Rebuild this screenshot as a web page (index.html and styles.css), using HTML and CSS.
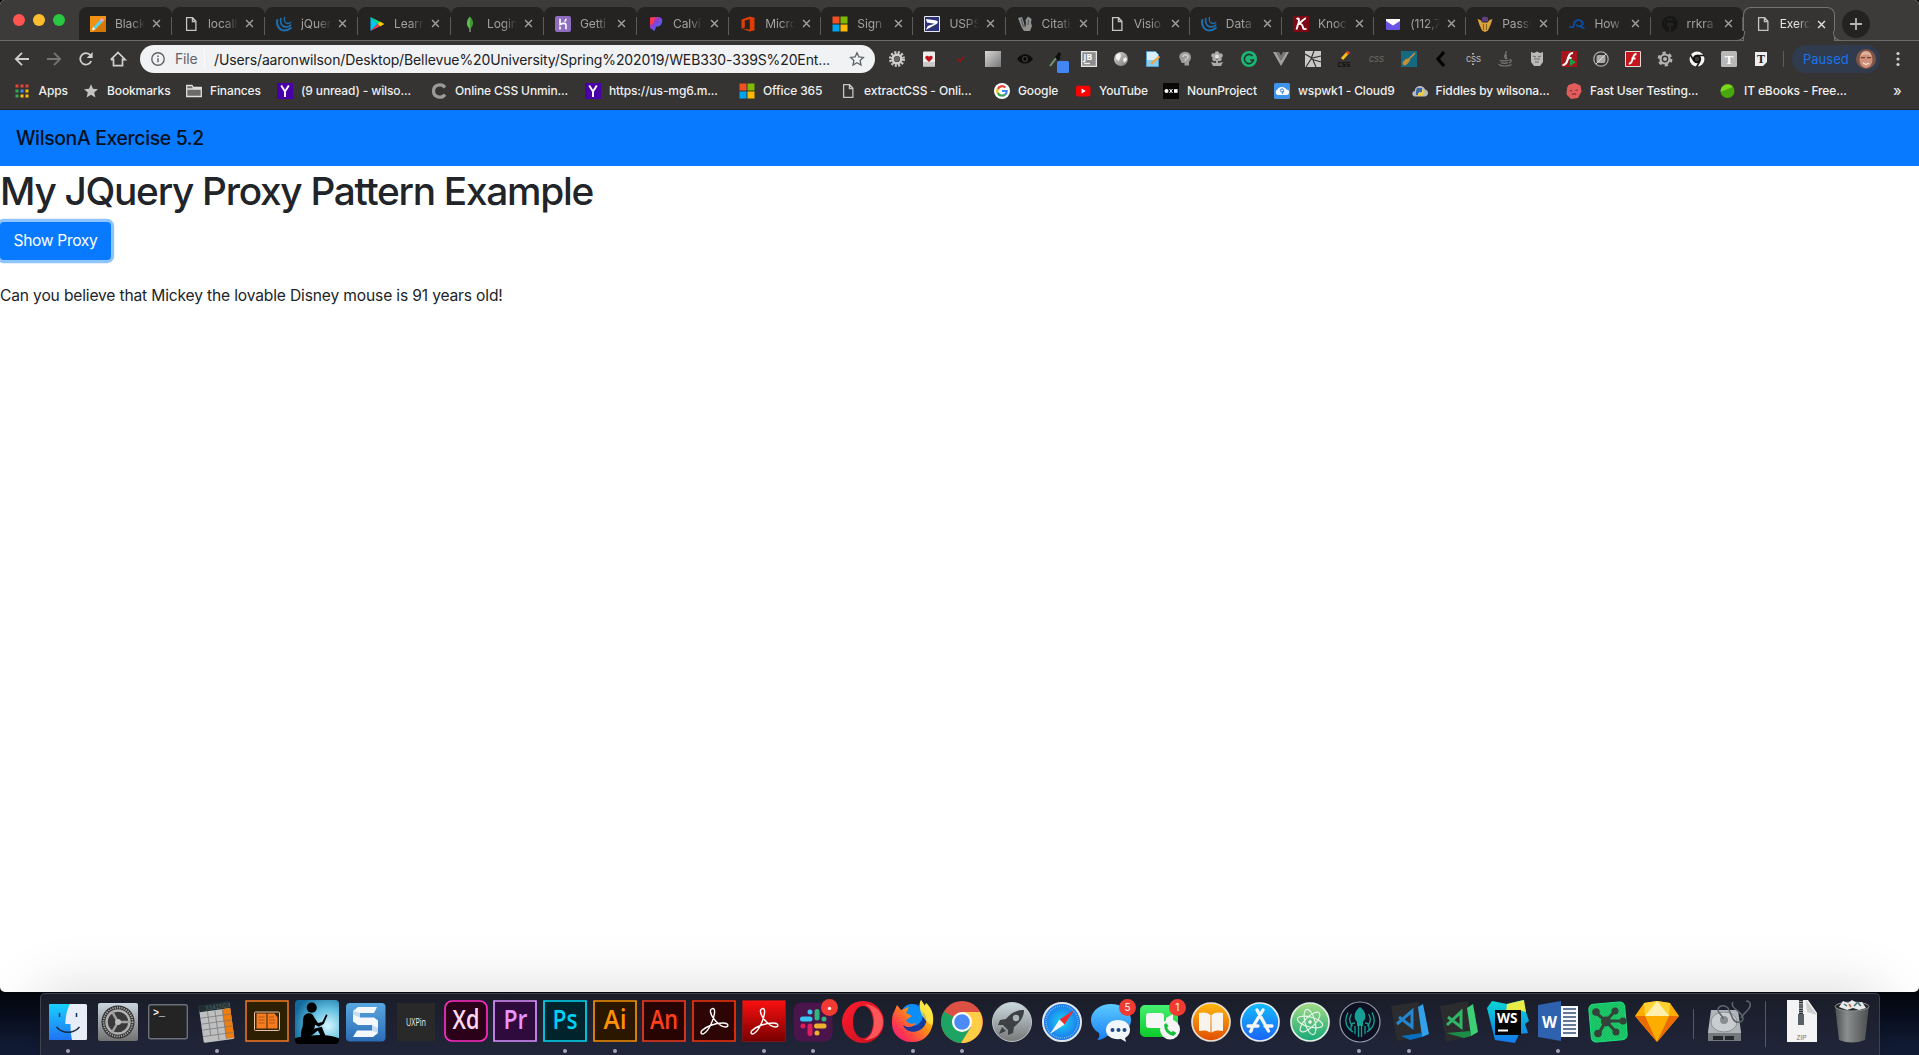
FILE: index.html
```html
<!DOCTYPE html>
<html lang="en">
<head>
<meta charset="utf-8">
<title>Exercise 5.2</title>
<link rel="stylesheet" href="styles.css">
</head>
<body>
<svg class="defs" width="0" height="0">
  <defs>
    <symbol id="doc" viewBox="0 0 16 16"><path d="M3.6 1.7h6l3.3 3.6v9H3.6zM9.4 1.9v3.6h3.4" fill="none" stroke="#c4c4c4" stroke-width="1.3"/></symbol>
    <symbol id="close" viewBox="0 0 10 10"><path d="M1.2 1.2l7.6 7.6M8.8 1.2L1.2 8.8" fill="none" stroke="currentColor" stroke-width="1.5"/></symbol>
    <symbol id="jquery" viewBox="0 0 16 16"><g fill="none" stroke="#1d70b0" stroke-linecap="round"><path d="M1.3 4C.2 9 3 14.300 8 14.500c3 0 5-1 6.800-2.600" stroke-width="2"/><path d="M4.800 2.500C3.800 6.500 5.500 10.300 9 10.900c2.500.3 4.300-.4 5.800-1.700" stroke-width="1.700"/><path d="M8.500 1.500C7.800 4 8.800 6.700 10.800 7.300c1.500.4 2.800.1 4-.8" stroke-width="1.400"/></g></symbol>
    <symbol id="ms" viewBox="0 0 16 16"><path fill="#f25022" d="M.5.5h7v7h-7z"/><path fill="#7fba00" d="M8.500.5h7v7h-7z"/><path fill="#00a4ef" d="M.5 8.500h7v7h-7z"/><path fill="#ffb900" d="M8.500 8.500h7v7h-7z"/></symbol>
    <symbol id="yahoo" viewBox="0 0 16 16"><path fill="#4a00a8" d="M0 0h16v16H0z"/><path d="M4.200 2.500L8 8.500l3.800-6M8 8.300V14" fill="none" stroke="#fff" stroke-width="1.900"/></symbol>
    <symbol id="acrobat" viewBox="0 0 44 44"><path d="M19.500 9c2-1.500 3.500 0 3 4-.8 7-6 18-10.500 20.500-2.500 1.400-4-.8-2-3 4-4 13-7.500 21-7.500 6 0 6 4 2.500 4-6 0-14-9.500-15-15-.3-1.500.2-2.500 1-3z" fill="none" stroke="#fff" stroke-width="1.400"/></symbol>
    <linearGradient id="gSteel" x2="0" y2="1"><stop stop-color="#c9d6dd"/><stop offset="1" stop-color="#717171"/></linearGradient>
    <linearGradient id="gFinder" x2="0" y2="1"><stop stop-color="#18d0ff"/><stop offset="1" stop-color="#2074f5"/></linearGradient>
    <radialGradient id="gKindle" cx=".75" cy=".6" r=".8"><stop stop-color="#d3f6ff"/><stop offset=".5" stop-color="#62bfe0"/><stop offset="1" stop-color="#126a9c"/></radialGradient>
    <linearGradient id="gSnag" x2="0" y2="1"><stop stop-color="#58a7e0"/><stop offset="1" stop-color="#2d6cb5"/></linearGradient>
    <linearGradient id="gRed" x2="0" y2="1"><stop stop-color="#fb1010"/><stop offset="1" stop-color="#780000"/></linearGradient>
    <linearGradient id="gOpera" x2="1" y2="1"><stop stop-color="#ff1b2d"/><stop offset="1" stop-color="#c3101f"/></linearGradient>
    <linearGradient id="gFox" x1="1" x2="0" y2="1"><stop stop-color="#fff44f"/><stop offset=".4" stop-color="#ff980e"/><stop offset=".75" stop-color="#ff3750"/><stop offset="1" stop-color="#e31587"/></linearGradient>
    <linearGradient id="gRocket" x2="0" y2="1"><stop stop-color="#cbdadf"/><stop offset="1" stop-color="#787878"/></linearGradient>
    <radialGradient id="gSafari"><stop stop-color="#1bd3f5"/><stop offset="1" stop-color="#1b70ea"/></radialGradient>
    <linearGradient id="gMsg" x2="0" y2="1"><stop stop-color="#5ccbff"/><stop offset="1" stop-color="#1a80f5"/></linearGradient>
    <linearGradient id="gFace" x2="0" y2="1"><stop stop-color="#45f070"/><stop offset="1" stop-color="#0ccb2a"/></linearGradient>
    <linearGradient id="gBooks" x2="0" y2="1"><stop stop-color="#ffb90f"/><stop offset="1" stop-color="#e04c00"/></linearGradient>
    <linearGradient id="gStore" x2="0" y2="1"><stop stop-color="#14bcfd"/><stop offset="1" stop-color="#1a62f5"/></linearGradient>
    <linearGradient id="gAtom" x2="0" y2="1"><stop stop-color="#a4dc86"/><stop offset="1" stop-color="#15a878"/></linearGradient>
    <linearGradient id="gTrash" x2="1"><stop stop-color="#4c4f50"/><stop offset=".35" stop-color="#8b8e8f"/><stop offset="1" stop-color="#4b4d4e"/></linearGradient>
    <linearGradient id="gWs" x2="0" y2="1"><stop stop-color="#08d8d2"/><stop offset="1" stop-color="#1478eb"/></linearGradient>
    <linearGradient id="gGrey" x2="1" y2="1"><stop stop-color="#d8d8d8"/><stop offset="1" stop-color="#777"/></linearGradient>
    <linearGradient id="gPandora" x2="1" y2="1"><stop stop-color="#ef2b71"/><stop offset=".5" stop-color="#7947df"/><stop offset="1" stop-color="#188cff"/></linearGradient>
    <pattern id="pGraffle" width="2" height="2" patternUnits="userSpaceOnUse" patternTransform="rotate(45)"><path fill="#20d070" d="M0 0h2v2H0z"/><path fill="#15b85c" d="M0 0h1v2H0z"/></pattern>
  </defs>
</svg>

<div class="window">
  <header class="tabstrip">
    <div class="lights"><i class="light red"></i><i class="light yellow"></i><i class="light green"></i></div>
    <nav class="tabs">
      <div class="tab"><svg class="fav" viewBox="0 0 16 16"><path fill="#f29111" d="M0 0h16v16H0z"/><path fill="#d57600" d="M16 3v13H3z"/><path d="M4 12.500L12.500 3.500" stroke="#5ad1e4" stroke-width="3.200"/><path d="M11 5l2-2.200" stroke="#f2a0b8" stroke-width="3.200"/><path fill="#fff" d="M2 14.500l1-3.500 2.400 2.200z"/></svg><span class="name">Black</span><svg class="x"><use href="#close"/></svg></div>
      <div class="tab"><svg class="fav"><use href="#doc"/></svg><span class="name">localh</span><svg class="x"><use href="#close"/></svg></div>
      <div class="tab"><svg class="fav"><use href="#jquery"/></svg><span class="name">jQuer</span><svg class="x"><use href="#close"/></svg></div>
      <div class="tab"><svg class="fav" viewBox="0 0 16 16"><path fill="#00c7f7" d="M1.500 1v14L8.500 8z"/><path fill="#00e676" d="M1.500 1l9.500 4.800L8.500 8z"/><path fill="#ffce00" d="M11 5.600L15.300 8 11 10.400 8.500 8z"/><path fill="#f23a50" d="M1.500 15L11 10.300 8.500 8z"/></svg><span class="name">Learn</span><svg class="x"><use href="#close"/></svg></div>
      <div class="tab"><svg class="fav" viewBox="0 0 16 16"><path fill="#3f9a36" d="M8 .5c3.500 4.200 4.600 8 0 12.700C3.500 9 4.500 4.500 8 .5z"/><path fill="#5fbb4e" d="M8 .5c-3.500 4-4.500 8.500 0 12.700z"/><path stroke="#b5c4a5" d="M8 12.500V16"/></svg><span class="name">Login</span><svg class="x"><use href="#close"/></svg></div>
      <div class="tab"><svg class="fav" viewBox="0 0 16 16"><rect width="16" height="16" rx="2" fill="#8e6cc0"/><path d="M5 2.800v5.700c2.800-1.500 6-1.600 6 .6v4.200M11 2.800c0 1.300-.4 2-1.400 3M5 10.500v3" fill="none" stroke="#fff" stroke-width="1.600"/></svg><span class="name">Getti</span><svg class="x"><use href="#close"/></svg></div>
      <div class="tab"><svg class="fav" viewBox="0 0 16 16"><path fill="url(#gPandora)" d="M2 1.500l7-.5c4.500 0 6 2 5 5.500-.8 3-3 4.200-6 4.200L6.500 15 2 12z"/><path fill="#ff3a4a" d="M2 2l5-1-1.500 6L2 9z"/></svg><span class="name">Calvi</span><svg class="x"><use href="#close"/></svg></div>
      <div class="tab"><svg class="fav" viewBox="0 0 16 16"><path fill="#dc3e06" fill-rule="evenodd" d="M1.500 3.500L9.800.5l4.700 1.300v12.400l-4.700 1.300-8.300-3 8.300 1V3.200L4.800 4.400v7l-3.300 1.400z"/></svg><span class="name">Micro</span><svg class="x"><use href="#close"/></svg></div>
      <div class="tab"><svg class="fav"><use href="#ms"/></svg><span class="name">Sign</span><svg class="x"><use href="#close"/></svg></div>
      <div class="tab"><svg class="fav" viewBox="0 0 16 16"><path fill="#2c3277" stroke="#e8e8ee" d="M.5.5h15v15H.5z"/><path fill="#fff" d="M2 3l9 1.300c3.500.6 3.500 2.400 1.500 3.700L1.800 14l2-4 6.700-2.200L3 6.500z"/></svg><span class="name">USPS</span><svg class="x"><use href="#close"/></svg></div>
      <div class="tab"><svg class="fav" viewBox="0 0 16 16"><path fill="#8f9293" d="M1 2l4-1 2 6 1 5 1-4-.5-4L11 .5l3.500 2.500L14 7l1 3-2 5H7L4.500 11z"/><path d="M4 3l2.500 8M11.500 4L11 9" stroke="#54575a" stroke-width="1.100"/><path d="M10 9l2 5" stroke="#b58a62"/></svg><span class="name">Citati</span><svg class="x"><use href="#close"/></svg></div>
      <div class="tab"><svg class="fav"><use href="#doc"/></svg><span class="name">Visio</span><svg class="x"><use href="#close"/></svg></div>
      <div class="tab"><svg class="fav"><use href="#jquery"/></svg><span class="name">Data</span><svg class="x"><use href="#close"/></svg></div>
      <div class="tab"><svg class="fav" viewBox="0 0 16 16"><path fill="#7e0714" d="M0 0h16v16H0z"/><path d="M3.500 3C6 1.500 6.500 3 5.500 7l-2 6.500M13 2.500C11.500 2 8.500 5.500 6 8c3-.5 3.500 1 4 3.500.3 2 2 2 3.500 1" fill="none" stroke="#fff" stroke-width="1.900"/></svg><span class="name">Knoc</span><svg class="x"><use href="#close"/></svg></div>
      <div class="tab"><svg class="fav" viewBox="0 0 16 16"><rect x="1" y="3" width="14" height="11" rx="1" fill="#6a54e8"/><path fill="#fff" d="M1 3h14v2L8 9.500 1 5z"/></svg><span class="name">(112,7</span><svg class="x"><use href="#close"/></svg></div>
      <div class="tab"><svg class="fav" viewBox="0 0 16 16"><path fill="#5c4180" d="M5 1.500L8 .5l3 1v4H5z"/><path fill="#d9a23b" d="M.5 3l3 1 2 2.500h5l2-2.500 3-1-2 6-2.500 5.500L8 16l-3-1.500L2.500 9z"/><path d="M6.500 8v6M9.500 8v6" stroke="#745014" stroke-width=".8"/></svg><span class="name">Passw</span><svg class="x"><use href="#close"/></svg></div>
      <div class="tab"><svg class="fav" viewBox="0 0 16 16"><path d="M.5 11c5 .8 4-1 4.500-3.500C6 3.500 12 3 13.500 6.500c.8 2-.8 4-3.500 3.800-1.500 0-2.500-.8-2.300-1.800M11 10.500l4.500 2" fill="none" stroke="#0b4fa5" stroke-width="1.800"/></svg><span class="name">How</span><svg class="x"><use href="#close"/></svg></div>
      <div class="tab"><svg class="fav" viewBox="0 0 16 16"><path fill="none" stroke="#151515" stroke-width="2" d="M6 14.500C-1 12-.5 2 7 1.200c9-.6 10 10.300 3 13.300v-3c3.500-.8 3-4 1.800-5l-.2-1.800-2 .7H6.500l-2-.7-.3 2c-1.500 2-.8 4.300 1.800 4.800z"/></svg><span class="name">rrkra</span><svg class="x"><use href="#close"/></svg></div>
      <div class="tab active"><svg class="fav"><use href="#doc"/></svg><span class="name">Exerc</span><svg class="x"><use href="#close"/></svg></div>
    </nav>
    <div class="newtab"><svg viewBox="0 0 12 12"><path d="M6 0v12M0 6h12" stroke="#b5b5b5" stroke-width="1.800"/></svg></div>
  </header>

  <div class="toolbar">
    <div class="navbtns">
      <svg viewBox="0 0 16 16"><path d="M15 8H2M8 1.800L1.800 8 8 14.200" fill="none" stroke="#cfcfcf" stroke-width="1.800"/></svg>
      <svg viewBox="0 0 16 16"><path d="M1 8h13M8 1.800L14.200 8 8 14.200" fill="none" stroke="#767574" stroke-width="1.800"/></svg>
      <svg viewBox="0 0 16 16"><path d="M13.200 10A5.700 5.700 0 1 1 12.400 4.300" fill="none" stroke="#cfcfcf" stroke-width="1.800"/><path fill="#cfcfcf" d="M14.600 1v6h-6z"/></svg>
      <svg viewBox="0 0 16 16"><path d="M3.500 7.500v7.200h9V7.500M.8 8.700L8 1.500l7.200 7.200h-2.700M.8 8.700h2.700" fill="none" stroke="#cfcfcf" stroke-width="1.700"/></svg>
    </div>
    <div class="omnibox">
      <svg class="info" viewBox="0 0 14 14"><circle cx="7" cy="7" r="6.200" fill="none" stroke="#5f6368" stroke-width="1.400"/><path d="M7 6.200v4M7 3.500V5" stroke="#5f6368" stroke-width="1.500"/></svg>
      <span class="scheme">File</span>
      <span class="url">/Users/aaronwilson/Desktop/Bellevue%20University/Spring%202019/WEB330-339S%20Ent...</span>
      <svg class="star" viewBox="0 0 16 16"><path d="M8 1.800l1.900 4.100 4.500.5-3.300 3.100.9 4.500L8 11.800 4 14l.9-4.500L1.600 6.400l4.500-.5z" fill="none" stroke="#5f6368" stroke-width="1.300"/></svg>
    </div>
    <div class="extensions">
      <svg viewBox="0 0 16 16"><circle cx="8" cy="8" r="6.500" fill="none" stroke="#c9c9c9" stroke-width="3" stroke-dasharray="2 1.400"/><circle cx="8" cy="8" r="4.300" fill="none" stroke="#d0d0d0" stroke-width="2.400"/><circle cx="8" cy="8" r="2.800" fill="#666"/></svg>
      <svg viewBox="0 0 16 16"><rect x="2" y=".5" width="12" height="15" rx="1" fill="#eee"/><path d="M2 11h12v4.500H2z" fill="#c9c9c9"/><path fill="#c1121b" d="M8 11L4.500 7.500C3.500 5 6.500 3.500 8 5.800 9.500 3.500 12.500 5 11.500 7.500z"/></svg>
      <svg viewBox="0 0 16 16"><path d="M5 8.500l1.800 2 4-5" fill="none" stroke="#9d1010" stroke-width="1.500"/></svg>
      <svg viewBox="0 0 16 16"><path fill="url(#gGrey)" d="M0 0h16v16H0z"/></svg>
      <svg viewBox="0 0 16 16"><path fill="#0b0b0b" d="M0 8c4-6.500 12-6.500 16 0-4 6-12 6-16 0z"/><circle cx="8" cy="8" r="3" fill="#3c3b3a"/><circle cx="8" cy="8" r="1.700" fill="#000"/></svg>
      <svg class="picker" viewBox="0 0 20 22"><path d="M1 15l7-9" stroke="#6e9b70" stroke-width="2"/><path d="M7 5l3.500 3.500M8 7l3-5" stroke="#0d0d0d" stroke-width="3.200"/><rect x="8" y="10" width="12" height="12" rx="1.500" fill="#4285f4"/></svg>
      <svg viewBox="0 0 16 16"><path fill="#8d8d8d" stroke="#e5e5e5" stroke-width="1.300" d="M.6.6h14.800v14.800H.6z"/><text x="2.600" y="9" class="ico-bold" font-size="8.500" fill="#fff">JB</text><path d="M3 12.500h6" stroke="#eee" stroke-width="1.300"/></svg>
      <svg viewBox="0 0 16 16"><circle cx="8" cy="8" r="7" fill="url(#gGrey)"/><path fill="#f3f3f3" d="M3 4l4-2 1 3-2 5-3-2zM10 8l3-2 1 3-3 3z"/></svg>
      <svg viewBox="0 0 16 16"><path fill="#d9effa" stroke="#52a0cf" d="M1.500.5h9l3 3v12h-12z"/><path fill="#8ecbea" d="M2 9h11v6H2z"/><path d="M6 13l8.500-7.500" stroke="#f0a33a" stroke-width="2.200"/></svg>
      <svg viewBox="0 0 16 16"><path fill="#9c9c9c" d="M8 .8c5 0 7 4 5.500 8L12 11v3.500H7.500V12H4.700L3 8C1 5 3.500.8 8 .8z"/><path d="M6 6c0-3 5-3 5 0 0 2-3 2-3 4" stroke="#d0d0d0" fill="none" stroke-width="1.400"/></svg>
      <svg viewBox="0 0 16 16"><g fill="#aaa"><circle cx="8" cy="2.500" r="2.300"/><circle cx="4.500" cy="4.500" r="2.300"/><circle cx="11.500" cy="4.500" r="2.300"/><circle cx="5.500" cy="8" r="2.300"/><circle cx="10.500" cy="8" r="2.300"/><path d="M7 9h2v3l5-1-2 4H4l-2-4 5 1z"/></g><circle cx="8" cy="5.500" r="2" fill="#e5e5e5"/></svg>
      <svg viewBox="0 0 16 16"><circle cx="8" cy="8" r="8" fill="#1fb574"/><path d="M11.500 5a4.600 4.600 0 1 0 1 4H9" fill="none" stroke="#1b3b30" stroke-width="1.600"/></svg>
      <svg viewBox="0 0 16 16"><path fill="#a0a0a0" d="M0 1h3.200L8 9.500 12.800 1H16L8 15z"/><path fill="#777" d="M3.200 1H6l2 3.500L10 1h2.800L8 9.500z"/></svg>
      <svg viewBox="0 0 16 16"><path fill="#c9c9c9" d="M0 0h16v16H0z"/><path d="M0 3l7 4 9-2M9 0L6 8l-5 8M6 8l10 3M8 9l3 7" stroke="#353433" stroke-width="1.200" fill="none"/></svg>
      <svg viewBox="0 0 16 16"><path d="M5 8l6-6.500" stroke="#f5c21b" stroke-width="3"/><path d="M10 2.800L12 .8" stroke="#e8432c" stroke-width="3"/><text x=".5" y="15.500" class="ico" font-size="8.500" fill="#050505">css</text></svg>
      <svg viewBox="0 0 16 16"><text x="0" y="11" class="ico-i" font-size="10" fill="#6b6a69">css</text></svg>
      <svg viewBox="0 0 16 16"><path fill="#136a82" d="M0 0h16v16H0z"/><path d="M7 9l7-7M5 10l4-1" stroke="#c78d35" stroke-width="1.700"/><ellipse cx="5" cy="11" rx="4" ry="2.300" transform="rotate(-45 5 11)" fill="#c78d35"/></svg>
      <svg viewBox="0 0 16 16"><path d="M11 1L5 8l6 7" fill="none" stroke="#000" stroke-width="3.200"/></svg>
      <svg viewBox="0 0 16 16"><text x="1" y="11" class="ico" font-size="10" fill="#bbb">css</text><path d="M8 2v1.500M8 12.500V14" stroke="#ddd" stroke-width="1.500"/></svg>
      <svg viewBox="0 0 16 16"><path d="M9 0c1.500 3-4 4 0 8M10 4c-2 1-1 2 0 4M3.500 9c-2 1 8 1.500 8 0M4 11.500c2 1 5 1 7 0M1.500 13.500c3 2 10 2 13 0M12 9c3-1 3 2 0 3" fill="none" stroke="#777" stroke-width="1.200"/></svg>
      <svg viewBox="0 0 16 16"><path fill="#b9b9b9" d="M2 1l3 1 3-1.500L11 2l3-1v10l-3 4H5l-3-4z"/><path d="M4 5l3 1M9 6l3-1M5 8h6M6 11h4" stroke="#6d6d6d" stroke-width="1.200"/></svg>
      <svg viewBox="0 0 16 16"><path fill="#a51519" d="M0 0h16v16H0z"/><path d="M12 2C8 2 8 5 6.500 9c-.8 3-2 5-5 5M6 7h4.500" fill="none" stroke="#fff" stroke-width="2.200"/><path fill="#14a04d" d="M9 7.500l6 3.700L9 15z"/></svg>
      <svg viewBox="0 0 16 16"><circle cx="8" cy="8" r="7.200" fill="none" stroke="#aaa" stroke-width="1.300"/><rect x="3.500" y="4" width="9" height="8" rx="2" fill="#aaa"/><path d="M3 13L13 3" stroke="#ddd"/></svg>
      <svg viewBox="0 0 16 16"><path fill="#c4161c" stroke="#e9d8d8" d="M.5.5h15v15H.5z"/><path d="M11.500 3C8 3 8.500 6 7.300 9c-.7 2.500-1.500 3.700-3.500 3.800M6.500 7.500h4" fill="none" stroke="#fff" stroke-width="1.800"/></svg>
      <svg viewBox="0 0 16 16"><circle cx="8" cy="8" r="4.500" fill="none" stroke="#b5b5b5" stroke-width="2.200"/><circle cx="8" cy="8" r="6.300" fill="none" stroke="#b5b5b5" stroke-width="2.200" stroke-dasharray="3.300 3.300"/><circle cx="8" cy="8" r="2" fill="#b5b5b5"/></svg>
      <svg viewBox="0 0 16 16"><circle cx="8" cy="8" r="7.500" fill="#f5f5f5"/><path d="M8 4.500h7M5 10L1.500 4M11 10l-3.500 6" stroke="#181818" stroke-width="1.500"/><circle cx="8" cy="8" r="4.200" fill="#111"/><circle cx="8" cy="8" r="2.300" fill="#383736"/></svg>
      <svg viewBox="0 0 16 16"><rect width="16" height="16" rx="1.500" fill="#b8b8b8"/><text x="3.700" y="12.500" class="ico-serif" font-size="13" fill="#fff">T</text></svg>
      <svg viewBox="0 0 16 16"><path fill="#eee" d="M2 1h12v10l-4 4H2z"/><text x="4" y="11.500" class="ico-serif" font-size="12" fill="#222">T</text></svg>
    </div>
    <div class="profile"><span>Paused</span><svg viewBox="0 0 20 20"><circle cx="10" cy="10" r="10" fill="#7d5547"/><ellipse cx="10" cy="10.500" rx="6.500" ry="8.500" fill="#cf9179"/><path d="M4.500 7.500C5 .5 15 .5 15.500 7.500 13 5 7 5 4.500 7.500z" fill="#e0b19a"/><path d="M5 8.700h4M11 8.700h4" stroke="#724334" stroke-width="1.200"/><path d="M7 14q3 2.500 6 0" stroke="#f0ddd5" fill="none" stroke-width="1.300"/></svg></div>
    <svg class="kebab" viewBox="0 0 4 16"><g fill="#d0d0d0"><circle cx="2" cy="2.500" r="1.600"/><circle cx="2" cy="8" r="1.600"/><circle cx="2" cy="13.500" r="1.600"/></g></svg>
  </div>

  <div class="bookmarks">
    <a><svg viewBox="1 0 16 16"><path fill="#ea4335" d="M1.500 1.500h3v3h-3zM6.500 1.500h3v3h-3zM11.500 1.500h3v3h-3z"/><path fill="#34a853" d="M1.500 6.500h3v3h-3zM1.500 11.500h3v3h-3z"/><path fill="#4285f4" d="M6.500 6.500h3v3h-3z"/><path fill="#fbbc05" d="M11.500 6.500h3v3h-3zM6.500 11.500h3v3h-3zM11.500 11.500h3v3h-3z"/></svg>Apps</a>
    <a><svg viewBox="0 0 16 16"><path d="M8 1.200l2 4.600 5 .4-3.800 3.300 1.200 4.900L8 11.800l-4.400 2.600 1.200-4.900L1 6.200l5-.4z" fill="#c4c4c4"/></svg>Bookmarks</a>
    <a><svg viewBox="0 0 16 16"><path d="M.7 13.500V2.500H6l1.300 2h8v9zM.7 6h14.600" fill="#6c6b6a" stroke="#dedede" stroke-width="1.300"/></svg>Finances</a>
    <a><svg><use href="#yahoo"/></svg>(9 unread) - wilso...</a>
    <a><svg viewBox="0 0 16 16"><path d="M14 4.500C11 0 2.500 1.500 2.500 8s8.500 8 11.500 3.500" fill="none" stroke="#999" stroke-width="3.200"/></svg>Online CSS Unmin...</a>
    <a><svg><use href="#yahoo"/></svg>https://us-mg6.m...</a>
    <a><svg><use href="#ms"/></svg>Office 365</a>
    <a><svg><use href="#doc"/></svg>extractCSS - Onli...</a>
    <a><svg viewBox="0 0 16 16"><circle cx="8" cy="8" r="8" fill="#fff"/><g fill="none" stroke-width="2.200"><path d="M11.300 4.500A4.700 4.700 0 0 0 3.800 6" stroke="#ea4335"/><path d="M3.800 5.800a4.700 4.700 0 0 0 0 4.400" stroke="#fbbc05"/><path d="M3.800 10A4.700 4.700 0 0 0 11 11.600" stroke="#34a853"/><path d="M8 8h4.700c0 1.700-.6 2.900-1.700 3.700" stroke="#4285f4"/></g></svg>Google</a>
    <a><svg viewBox="0 0 16 16"><rect x="1" y="2.800" width="14.500" height="10.600" rx="2" fill="#f00"/><path fill="#fff" d="M6.600 5.500v5L10.800 8z"/></svg>YouTube</a>
    <a><svg viewBox="0 0 16 16"><path fill="#080808" d="M0 0h16v16H0z"/><circle cx="3.500" cy="8" r="2" fill="#fff"/><path d="M6.500 6l3 4M9.500 6l-3 4" stroke="#fff"/><path fill="#fff" d="M11 6.200h3.600v3.600H11z"/></svg>NounProject</a>
    <a><svg viewBox="0 0 16 16"><rect width="16" height="16" rx="1.500" fill="#3f93e8"/><path fill="#fff" d="M3.500 12a3 3 0 0 1 0-5.500C4.500 3 11 3 12.500 6.500c3.500 0 3.500 5.500 0 5.500z"/><circle cx="8" cy="7.500" r="1.600" fill="none" stroke="#3281d8"/><path d="M9.600 8L8 11" stroke="#3281d8"/></svg>wspwk1 - Cloud9</a>
    <a><svg viewBox="0 0 16 16"><path fill="#b7bbc2" d="M3 13.500C-.5 13-.5 8.500 2.800 8 3 1.500 12 1.500 13 6.500c4 .5 4 6.500 0 7z"/><path fill="#3a68a8" d="M5 5h5v4H7v3H4V8z"/><path fill="#f0cc43" d="M10 7h2.500v3.500L10 13H6v-3h4z"/></svg>Fiddles by wilsona...</a>
    <a><svg viewBox="0 0 16 16"><path fill="#e25c5c" d="M2.500 2l6-2 6 2.500 1 6-3.500 6.500-7 1L.5 11.500 1 5z"/><path d="M4 7.500l2 .5M9.500 7.500l2-.5M6 11.500q2.500-1.500 4 0" stroke="#672c30" fill="none" stroke-width="1.200"/></svg>Fast User Testing...</a>
    <a><svg viewBox="0 0 16 16"><circle cx="7.500" cy="8" r="7" fill="#46a80c"/><path fill="#7ed51d" d="M.7 9A7 7 0 0 1 13 3.800z"/></svg>IT eBooks - Free...</a>
    <a class="more">»</a>
  </div>

  <main class="page">
    <nav class="navbar">WilsonA Exercise 5.2</nav>
    <h1>My JQuery Proxy Pattern Example</h1>
    <button class="btn">Show Proxy</button>
    <p>Can you believe that Mickey the lovable Disney mouse is 91 years old!</p>
  </main>
</div>

<footer class="dock">
  <div class="app on"><svg viewBox="0 0 44 44"><rect x="3" y="4" width="38" height="36" rx="1.500" fill="#e8eef7"/><path fill="url(#gFinder)" d="M4.500 4H24c-3 5.500-4.300 11-4.700 20h5.200c0 6 .5 11 1.500 16H3V5.500z"/><path d="M13.500 13v4M30.500 13v4" stroke="#1c3150" stroke-width="1.500"/><path d="M10.500 27c6 7 17 7 23 0" fill="none" stroke="#17273d" stroke-width="1.400"/></svg></div>
  <div class="app"><svg viewBox="0 0 44 44"><rect x="2" y="3" width="40" height="38" rx="2" fill="url(#gSteel)"/><circle cx="22" cy="22" r="16.500" fill="#2b2b2b"/><circle cx="22" cy="22" r="14.500" fill="none" stroke="#a7a7a7" stroke-width="2" stroke-dasharray="1.300 1"/><circle cx="22" cy="22" r="11.500" fill="#3a3a3a" stroke="#b0b0b0" stroke-width="2.500"/><path d="M22 22h12M22 22l-6-10.500M22 22l-6 10.500" stroke="#a0a0a0" stroke-width="2.500"/><circle cx="22" cy="22" r="3" fill="#bdbdbd"/></svg></div>
  <div class="app"><svg viewBox="0 0 44 44"><rect x="2.700" y="4.700" width="38.600" height="34" rx="2" fill="#242424" stroke="#6b717b" stroke-width="1.400"/><text x="7" y="16" class="ico-mono" font-size="10" fill="#eee">&gt;_</text></svg></div>
  <div class="app on"><svg viewBox="0 0 44 44"><g transform="rotate(-8 22 22)"><rect x="6" y="4" width="31" height="37" rx="1.500" fill="#bdbfc1"/><path fill="#202e30" d="M6 3h31v7H6z"/><path fill="#f07c0c" d="M29 10h8v30h-8z"/><path d="M6 16h31M6 22h31M6 28h31M6 34.500h31M14 10v24M21.500 10v30M29 10v30" stroke="#7a7570" stroke-width=".7"/><text x="12" y="9" class="ico" font-size="6.500" fill="#50686a">3341503</text></g></svg></div>
  <div class="app"><svg viewBox="0 0 44 44"><path fill="#2c1f02" stroke="#f47a20" stroke-width="1.500" d="M1 1h42v40H1z"/><rect x="9.500" y="12" width="25" height="18.500" rx="1" fill="#3a2508" stroke="#e6c5a7"/><path fill="#f57c20" d="M11.500 13.500h10v15h-10zM22.500 13.500h7l3 4v11h-10z"/><path d="M13.500 17h6M13.500 20h6M13.500 23h6M24 17h5M24 20h6M24 23h6" stroke="#a74b10" stroke-width=".8"/></svg></div>
  <div class="app"><svg viewBox="-1 -1 46 46"><rect x="-1" y="-1" width="46" height="45" rx="4" fill="url(#gKindle)"/><path d="M-1 39c6-2 12-3 16-2.500 10-1.500 20-1 30 2.500v3q-1 3-4 3H3q-4 0-4-4z"/><circle cx="16.500" cy="7" r="5.300"/><path d="M12 13c4-1 6 1 7 4l4 6 4.500-1 4-8 1.500 1-4 9-5 3-4-2-1 4 8-2 4 10h4v2h-8l-4-8-9 7-9 1c1-3-1-5 2-12 1-7-1-12 5-14z"/></svg></div>
  <div class="app"><svg viewBox="0 0 44 44"><rect x="2" y="3" width="39.500" height="38.500" rx="4" fill="url(#gSnag)"/><path fill="#f5f9fd" d="M14 7h19l-3 6H16v4.500h14l4 3V33l-5 4H9l4-6.500h15V25H14l-5-3.500V11z"/><path fill="#c5dbf0" d="M16 13v4.500l-7-3V11zM28 30.500V25l6 3v5z"/></svg></div>
  <div class="app"><svg viewBox="0 0 44 44"><path fill="#292929" d="M3 3h38v38H3z"/><text x="22" y="26" text-anchor="middle" class="ico-cond" font-size="11" textLength="20" lengthAdjust="spacingAndGlyphs" fill="#f0f0f0">UXPin</text></svg></div>
  <div class="app"><svg viewBox="0 0 44 44"><rect x="1" y="1" width="42" height="40" rx="7" fill="#2b0019" stroke="#ff2bc2" stroke-width="1.700"/><text x="22" y="29.300" text-anchor="middle" textLength="27" lengthAdjust="spacingAndGlyphs" class="adobe" fill="#ffd9f5">Xd</text></svg></div>
  <div class="app"><svg viewBox="0 0 44 44"><path fill="#2f0a3c" stroke="#d991ff" stroke-width="1.700" d="M1 1h42v40H1z"/><text x="22.500" y="29.300" text-anchor="middle" textLength="24" lengthAdjust="spacingAndGlyphs" class="adobe" fill="#e894ff">Pr</text></svg></div>
  <div class="app on"><svg viewBox="0 0 44 44"><path fill="#00232c" stroke="#00d9f5" stroke-width="1.700" d="M1 1h42v40H1z"/><text x="22" y="29.300" text-anchor="middle" textLength="25" lengthAdjust="spacingAndGlyphs" class="adobe" fill="#00d0f5">Ps</text></svg></div>
  <div class="app on"><svg viewBox="0 0 44 44"><path fill="#2b1600" stroke="#f59000" stroke-width="1.700" d="M1 1h42v40H1z"/><text x="22" y="29.300" text-anchor="middle" textLength="23" lengthAdjust="spacingAndGlyphs" class="adobe" fill="#ff9100">Ai</text></svg></div>
  <div class="app"><svg viewBox="0 0 44 44"><path fill="#270402" stroke="#ee3a1e" stroke-width="1.700" d="M1 1h42v40H1z"/><text x="22" y="29.300" text-anchor="middle" textLength="28" lengthAdjust="spacingAndGlyphs" class="adobe" fill="#ff3f1c">An</text></svg></div>
  <div class="app"><svg viewBox="0 0 44 44"><path fill="#2c0504" stroke="#f4330b" stroke-width="1.700" d="M1 1h42v40H1z"/><use href="#acrobat"/></svg></div>
  <div class="app on"><svg viewBox="0 0 44 44"><path fill="url(#gRed)" stroke="#a31a1a" stroke-width=".5" d="M.5.500h43v41H.5z"/><use href="#acrobat"/></svg></div>
  <div class="app on"><svg viewBox="0 0 44 44"><rect x="2.500" y="2.500" width="39" height="39" rx="8" fill="#4a154b"/><g stroke-width="5" stroke-linecap="round"><path d="M19 12v.1M11.500 19H19" stroke="#36c5f0"/><path d="M26 11.500V18M33 19v.1" stroke="#2eb67d"/><path d="M25.500 26H33M26 33v.1" stroke="#ecb22e"/><path d="M19 26v7.500M12 26v.1" stroke="#e01e5a"/></g></svg><b class="badge">•</b></div>
  <div class="app"><svg viewBox="0 0 44 44"><path fill="url(#gOpera)" fill-rule="evenodd" d="M22 1a21 21 0 1 0 0 42 21 21 0 1 0 0-42zm0 5c6 0 10 7 10 16s-4 16-10 16-10-7-10-16S16 6 22 6z"/><path fill="#fd565a" d="M23 4c12 1 19 8 19 18S35 40 23 40c6-2 10-9 10-18S29 6 23 4z"/></svg></div>
  <div class="app on"><svg viewBox="0 0 44 44"><circle cx="23" cy="20" r="16" fill="#143b9d"/><circle cx="21" cy="15" r="11" fill="#0b8ef5"/><path fill="url(#gFox)" d="M3 12l3-7 4 5 8-3-3 6 6 3-6 4c1 3 5 5 10 3-3 5-9 5-13 2 3 9 17 9 22 0 3-6 1-10-3-14-4-5-2-9-1-11l4 6 1-3c6 5 8 12 7 20-2 12-10 19-20 19C10 43 1 34 1 24c0-5 0-8 2-12z"/><path fill="#fff04c" d="M30 0l4 6 1-3c7 7 8 16 6 23-2-3-4-2-8-8-5-6-5-13-3-18z" opacity=".75"/></svg></div>
  <div class="app on"><svg viewBox="0 0 44 44"><circle cx="22" cy="22" r="21" fill="#dd5144"/><path fill="#1da462" d="M4 11.500A21 21 0 0 0 21 43l10-16-9-5z"/><path fill="#ffcd46" d="M21 43a21 21 0 0 0 19-31H22l9 15z"/><circle cx="22" cy="22" r="10" fill="#fff"/><circle cx="22" cy="22" r="7.800" fill="#4c8bf5"/></svg></div>
  <div class="app"><svg viewBox="0 0 44 44"><circle cx="22" cy="22" r="19.500" fill="url(#gRocket)" stroke="#bcc5c8"/><path fill="#3d4143" d="M34 10c-9 0-14 4-18 9l-6 1-2 5h5l5 5v5l5-2 1-6c5-4 10-9 10-17zM12 27l-3 7 7-3z"/><circle cx="26" cy="18" r="3.200" fill="#aab5b8"/></svg></div>
  <div class="app"><svg viewBox="0 0 44 44"><circle cx="22" cy="22" r="19" fill="url(#gSafari)" stroke="#dfe6ea" stroke-width="2"/><circle cx="22" cy="22" r="16" fill="none" stroke="#b5e7f7" stroke-width="1.500" stroke-dasharray=".5 1.500"/><path fill="#f12b2e" d="M34 10L19.500 19.500l5 5z"/><path fill="#f4f4f4" d="M10 34l9.500-14.500 5 5z"/></svg></div>
  <div class="app"><svg viewBox="0 0 44 44"><path fill="url(#gMsg)" d="M22 4c11 0 20 7 20 16S33 36 22 36h-4c-2 2-6 4-10 4 2-2 3-4 2-7-5-3-8-8-8-13C2 11 11 4 22 4z"/><path fill="#f2f7fb" d="M29 20c7 0 12 4 12 10 0 4-2 6-5 8l1 4-5-3c-9 1-15-3-15-9s5-10 12-10z"/><g fill="#1e4a85"><circle cx="23.500" cy="30" r="2"/><circle cx="29.500" cy="30" r="2"/><circle cx="35.500" cy="30" r="2"/></g></svg><b class="badge">5</b></div>
  <div class="app"><svg viewBox="0 0 44 44"><rect x="1" y="5" width="38" height="32" rx="5" fill="url(#gFace)"/><rect x="7" y="13" width="18" height="15" rx="3" fill="#f6f6f6"/><path fill="#f6f6f6" d="M27 18l7-4v14l-7-4z"/><circle cx="31" cy="29.500" r="10" fill="#f5f5f5"/><path d="M26.500 25c0 5 3 8.500 8.500 9.500M26 24l2.500 3M33 32l3.500 2" fill="none" stroke="#16c23d" stroke-width="2.800"/></svg><b class="badge">1</b></div>
  <div class="app"><svg viewBox="0 0 44 44"><circle cx="22" cy="22" r="19" fill="url(#gBooks)" stroke="#e9e0d8" stroke-width="1.700"/><path fill="#f7f3ee" d="M21.500 15c-3-3-8-3-11.500-2v18c4-1 8-1 11.500 1.500zM22.500 15c3-3 8-3 11.500-2v18c-4-1-8-1-11.500 1.500z"/></svg></div>
  <div class="app"><svg viewBox="0 0 44 44"><circle cx="22" cy="22" r="19" fill="url(#gStore)" stroke="#e4ecf2" stroke-width="1.700"/><path d="M19 10l11.500 21M25 10L14 28M10 26h10M27 26h7M12.500 31.500l1-1.500" stroke="#f5f5f5" stroke-width="3.300" stroke-linecap="round"/></svg></div>
  <div class="app"><svg viewBox="0 0 44 44"><circle cx="22" cy="22" r="19" fill="url(#gAtom)" stroke="#dff0e4" stroke-width="1.700"/><g fill="none" stroke="#e9f8ee" stroke-width="1.100"><ellipse cx="22" cy="22" rx="13" ry="5" transform="rotate(15 22 22)"/><ellipse cx="22" cy="22" rx="13" ry="5" transform="rotate(75 22 22)"/><ellipse cx="22" cy="22" rx="13" ry="5" transform="rotate(-45 22 22)"/></g><circle cx="22" cy="22" r="1.700" fill="#fff"/></svg></div>
  <div class="app on"><svg viewBox="0 0 44 44"><circle cx="22" cy="22" r="20" fill="#0c1020" stroke="#949cab" stroke-width="1.200"/><path fill="#169f94" d="M22 7c5 3.500 6 8 5 12l-2 3v4h-6v-4l-2-3c-1-4 0-8.500 5-12z"/><path d="M17 23c-4.500 0-4 2-4 8M27 23c4.500 0 4 2 4 8M17 26v8M27 26v8M10 12.500c-4 8-2 15 5 19.500M34 12.500c4 8 2 15-5 19.500M13.500 14c-3 5-2 9 1 12M30.500 14c3 5 2 9-1 12M20.500 25v12M23.500 25v12" fill="none" stroke="#169f94" stroke-width="1.300"/></svg></div>
  <div class="app on"><svg viewBox="0 0 44 44"><path fill="#2c2c2e" d="M4 6l28-4 4 35-26 4z"/><path fill="#32a0ea" d="M31 7l5-3 6 30-7 3z"/><path fill="#0870bd" d="M14 36l21-3v4l-12 3z"/><path d="M12 17l13 10V11L10 24" fill="none" stroke="#2386ce" stroke-width="3"/></svg></div>
  <div class="app"><svg viewBox="0 0 44 44"><path fill="#2c2c2e" d="M3 6l28-5 5 35-27 6z"/><path fill="#3dce76" d="M30 8l6-4 5 28-7 4z"/><path fill="#1c8c49" d="M9 33l25-2v5l-7 2z"/><path d="M11 17l13 10V12L10 25" fill="none" stroke="#31b667" stroke-width="3"/></svg></div>
  <div class="app"><svg viewBox="0 0 44 44"><path fill="url(#gWs)" d="M1 8l5-7 15 3L37 0l2 9 4 12-4 3 3 9-9 1-4 9-20-3z"/><path fill="#e9ed48" d="M21 4l17-4 2 12-8-2-12 2z"/><path fill="#050505" d="M9 10h26v25H9z"/><text x="11" y="23" class="ico-bold" font-size="13.500" fill="#fff">WS</text><path d="M12 30.500h10" stroke="#fff" stroke-width="2"/></svg></div>
  <div class="app on"><svg viewBox="0 0 44 44"><path fill="#f7f9fc" d="M22 6h20v31H22z"/><path d="M27 9h13M27 13h13M27 17h13M27 21h13M27 25h13M27 29h13M27 33h13" stroke="#344e79" stroke-width="1.500"/><path fill="#2e62ae" d="M2 5l23-4v40L2 37z"/><text x="6" y="28" class="ico-bold" font-size="16" fill="#fff" textLength="15" lengthAdjust="spacingAndGlyphs">W</text></svg></div>
  <div class="app"><svg viewBox="0 0 44 44"><rect x="4" y="3" width="36" height="38" rx="5" transform="rotate(-5 22 22)" fill="url(#pGraffle)" stroke="#1de080"/><path d="M20 21L10 13M20 21l9-10M20 21h17M20 21l10 11M20 21L13 33" stroke="#34423a" stroke-width="3"/><g fill="#34423a"><circle cx="20" cy="21.500" r="5"/><circle cx="10" cy="12" r="3.800"/><circle cx="29" cy="11" r="3.500"/><circle cx="37" cy="21" r="3.500"/><circle cx="30" cy="32" r="3.500"/><circle cx="12" cy="33.500" r="3.800"/></g></svg></div>
  <div class="app"><svg viewBox="0 0 44 44"><path fill="#fdad00" d="M9 3l13-2 13 2 9 13-22 26L0 16z"/><path fill="#fdd231" d="M9 3l13-2 13 2-1 13H10z"/><path fill="#fff0b0" d="M22 1l12 15H10z"/><path fill="#ea6c00" d="M0 16h10l12 26zM44 16H34L22 42z"/></svg></div>
  <i class="sep short"></i>
  <div class="app disk"><svg viewBox="0 0 44 44"><path fill="#aeb4b8" d="M4 10h27l3 22v9H1v-9z"/><path fill="#74797d" d="M1 33h33v8H1z"/><path fill="#26292b" d="M6 36h10v4H6zM18 36h9v4h-9z"/><ellipse cx="17" cy="22" rx="13" ry="10" fill="#c9cdd0" stroke="#8c9195"/><circle cx="17" cy="20" r="4" fill="#878c90"/><path d="M16 19c0-4-6-6-5-10 2-5 9-4 11 1l4 9c3 5 10 4 10-1 0-6-14-10-10-16M34 18c3-6 11-9 9-15-1-2-3-2-4-2" fill="none" stroke="#5c646a" stroke-width="1.500"/></svg></div>
  <i class="sep"></i>
  <div class="app zip"><svg viewBox="0 0 44 44"><path fill="#f4f4f4" d="M7 0h21l9 13v29H7z"/><path fill="#cfcfcf" d="M26 0l11 15-10-3z"/><path d="M21 0v20" stroke="#2f3438" stroke-width="4" stroke-dasharray="1.500 .6"/><path fill="#596066" d="M18 14h6v11h-6z"/><text x="16.500" y="39.500" class="ico" font-size="6.500" fill="#777">ZIP</text></svg></div>
  <div class="app"><svg viewBox="0 0 44 44"><path fill="url(#gTrash)" d="M5 6h34l-4 34q-13 5-26 0z"/><ellipse cx="22" cy="6.500" rx="17" ry="4.500" fill="#25282a" stroke="#8d9092"/><path fill="#e9e9e9" d="M9 7l4-6 5 2 4-3 5 3 5-1 4 6-7 2-6-2-6 2z"/><path d="M14 4l3 2M28 3l3 3M24 6l3-3" stroke="#3c6b74" stroke-width="1.500"/><path d="M19 4l2 3" stroke="#bd6038" stroke-width="1.500"/></svg></div>
</footer>
</body>
</html>
```
FILE: styles.css
```css
* { box-sizing: border-box; }
body {
  margin: 0;
  width: 1919px;
  height: 1055px;
  overflow: hidden;
  background: linear-gradient(#03050a 990px, #070c19 1010px, #111b34 1045px);
  font-family: Inter, "Liberation Sans", sans-serif;
}
svg { display: block; flex: none; overflow: visible; }
.defs { position: absolute; }
.window { height: 992px; background: #fff; border-radius: 5px; overflow: hidden; }

/* Tab strip */
.tabstrip {
  display: flex;
  height: 41px;
  padding-top: 7px;
  background: linear-gradient(#6b6a69, #6b6a69) 0 100% / 100% 1px no-repeat, #3c3b3a;
}
.lights { display: flex; gap: 8px; width: 79px; padding: 7px 0 0 13px; }
.light { width: 12px; height: 12px; border-radius: 50%; }
.red { background: #ff5550; }
.yellow { background: #febc2e; }
.green { background: #28c940; }
.tabs { display: flex; }
.tab {
  position: relative;
  display: flex;
  flex: none;
  align-items: center;
  width: 92.150px;
  height: 33px;
  padding-left: 11px;
  border-radius: 8px 8px 0 0;
  background: linear-gradient(#5c5b5a, #5c5b5a) 100% 10px / 1px 18px no-repeat, #242322;
  color: #a3a2a1;
}
.tab:nth-child(-n+6) { width: 93px; }
.fav { width: 16px; height: 16px; }
.name {
  width: 30px;
  margin: 0 7px 0 9px;
  overflow: hidden;
  white-space: nowrap;
  font-size: 12px;
  line-height: 16px;
  letter-spacing: -.1px;
  -webkit-mask-image: linear-gradient(90deg, #000 55%, transparent);
  mask-image: linear-gradient(90deg, #000 55%, transparent);
}
.x { width: 9px; height: 9px; }
.active {
  z-index: 1;
  height: 34px;
  padding-bottom: 1px;
  background: #353433;
  border: solid #737271;
  border-width: 1px 1px 0;
  color: #e4e4e4;
}
.active::before, .active::after {
  content: "";
  position: absolute;
  bottom: 0;
  width: 8px;
  height: 9px;
  border-bottom: 1px solid #737271;
}
.active::before { left: -8px; border-right: 1px solid #737271; border-radius: 0 0 8px; background: #242322; }
.active::after { right: -8px; border-left: 1px solid #737271; border-radius: 0 0 0 8px; background: #3c3b3a; }
.newtab { display: grid; place-items: center; width: 28px; height: 28px; margin: 3px 0 0 7px; border-radius: 50%; background: #242322; }
.newtab svg { width: 12px; }

/* Toolbar */
.toolbar { display: flex; align-items: center; height: 36px; background: #353433; }
.navbtns { display: flex; gap: 16px; width: 140px; padding-left: 14px; }
.navbtns svg { width: 16px; height: 16px; }
.omnibox { display: flex; align-items: center; width: 735px; height: 28px; padding: 0 10px 0 11px; border-radius: 14px; background: #f1f2f4; font-size: 14px; color: #202124; }
.info { width: 14px; }
.scheme { width: 30px; height: 20px; margin-left: 10px; line-height: 20px; letter-spacing: -.2px; color: #5f6368; border-right: 1px solid #fafafa; }
.url { flex: 1; margin-left: 9px; white-space: nowrap; letter-spacing: -.12px; }
.star { width: 16px; }
.extensions { display: flex; align-items: center; gap: 16px; height: 16px; padding: 0 14px; }
.extensions svg { width: 16px; height: 16px; }
.extensions .picker { width: 20px; height: 22px; margin: 0 -4px -6px 0; }
.profile { display: flex; align-items: center; justify-content: space-between; width: 88px; height: 28px; margin-left: 9px; padding: 0 4px 0 11px; border-radius: 14px; background: #303b4d; font-size: 13px; color: #1a73e8; position: relative; }
.profile::before { content: ""; position: absolute; left: -9px; top: 6px; width: 1px; height: 16px; background: #5c5b5a; }
.profile svg { width: 20px; }
.kebab { width: 4px; height: 16px; margin-left: 16px; }

/* Bookmarks bar */
.bookmarks {
  display: grid;
  grid-template-columns: 68.500px 103px 91px 154px 154px 154px 101px 154px 81px 88px 111px 137.500px 154.500px 154px 173px 30px;
  align-items: center;
  height: 33px;
  padding: 0 0 5px 14.500px;
  border-bottom: 1px solid #272625;
  background: #353433;
  font-size: 12px;
  font-weight: 500;
  color: #efefef;
}
.bookmarks a { display: flex; align-items: center; gap: 8px; white-space: nowrap; letter-spacing: -.12px; }
.bookmarks svg { width: 16px; height: 16px; }
.bookmarks .more { font-size: 15px; font-weight: 400; }

/* Page */
.page { color: #212529; }
.navbar { height: 56px; padding: 13px 16px; background: #087aff; color: #04101d; font-size: 19.400px; font-weight: 500; line-height: 30px; letter-spacing: -.35px; }
h1 { margin: 0 0 6px; font-size: 38.800px; font-weight: 500; line-height: 50px; letter-spacing: -1.280px; }
.btn { display: block; width: 111px; height: 38px; padding: 0; border: 0; border-radius: 4px; box-shadow: 0 0 0 3.200px #8ec5ff; background: #087aff; color: #fff; font: 15.600px/24px Inter, "Liberation Sans", sans-serif; letter-spacing: -.35px; }
p { margin: 24px 0 0; font-size: 15.600px; line-height: 24px; letter-spacing: -.16px; }

/* Dock */
.dock {
  position: relative;
  display: flex;
  width: 1840px;
  height: 62px;
  margin: 1px 0 0 40px;
  padding-left: 2.600px;
  border: solid #3f424c;
  border-width: 1px 1px 0;
  border-radius: 5px 5px 0 0;
  background: linear-gradient(#1a1d28, #20253a);
  box-shadow: 0 0 58px rgba(0, 0, 0, .17);
}
.app { position: relative; flex: none; width: 49.670px; padding: 6px 0 0 2.850px; }
.app svg { width: 44px; height: 44px; }
.on::after { content: ""; position: absolute; left: 22.800px; top: 55px; width: 4px; height: 4px; border-radius: 50%; background: #a3a7b5; }
.badge { position: absolute; right: 0; top: 5px; width: 17px; height: 17px; border-radius: 50%; background: #f03a32; color: #fff; font-size: 10px; font-weight: 400; line-height: 17px; text-align: center; }
.sep { flex: none; width: 1px; height: 46px; margin-top: 7px; background: #535767; }
.short { height: 30px; margin: 15px 0 0 11px; }
.disk { width: 71px; padding-left: 13px; }
.zip { margin-left: 11px; }
.adobe { font-family: "Open Sans", sans-serif; font-size: 27px; font-weight: 600; }
.ico { font-family: "Liberation Sans", sans-serif; }
.ico-i { font-family: "Liberation Sans", sans-serif; font-style: italic; }
.ico-bold { font-family: "Open Sans", sans-serif; font-weight: 700; }
.ico-serif { font-family: "Liberation Serif", serif; font-weight: 700; }
.ico-mono { font-family: "Liberation Mono", monospace; font-weight: 700; }
.ico-cond { font-family: "Open Sans", sans-serif; }
```
